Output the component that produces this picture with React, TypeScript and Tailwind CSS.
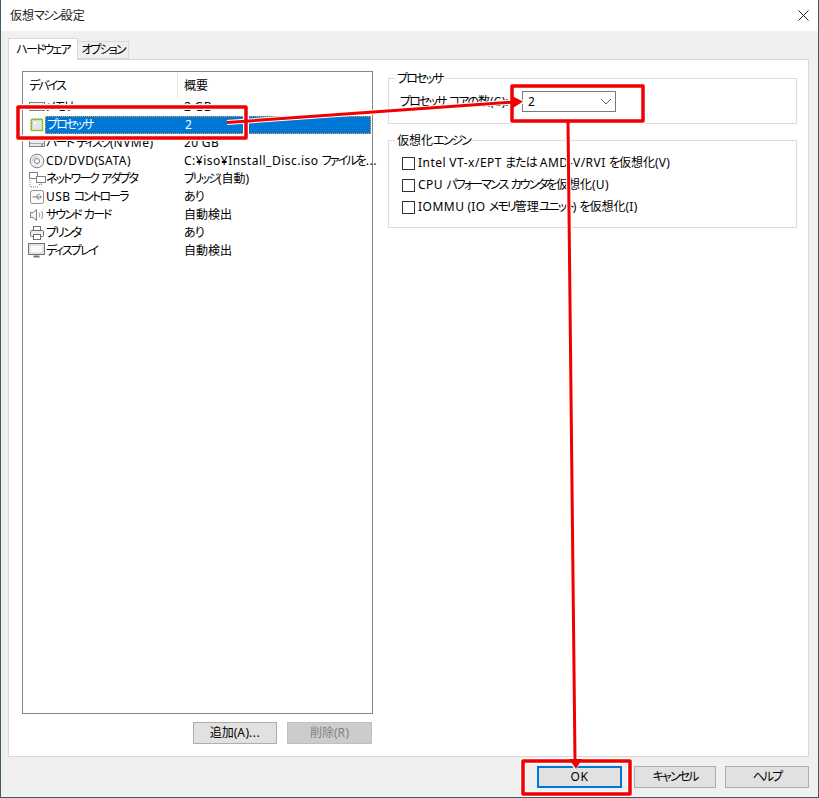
import React from "react";

const font = { fontFamily: '"Noto Sans", "Noto Sans CJK JP", sans-serif' };

function T({ children }: { children: string }) {
  const parts = children.match(/[\u30A0-\u30FF]+|[\u3040-\u309F]+|[A-Za-z0-9_:.\/\-¥]+|[^\u30A0-\u30FF\u3040-\u309FA-Za-z0-9_:.\/\-¥]+/g) ?? [];
  return (
    <span className="whitespace-pre">
      {parts.map((p, i) => {
        if (/^[\u30A0-\u30FF]/.test(p)) return <span key={i} className="tracking-[-1.9px]">{p}</span>;
        if (/^[\u3040-\u309F]/.test(p)) return <span key={i} className="tracking-[-1px]">{p}</span>;
        if (/^[A-Za-z0-9_:.\/\-¥]/.test(p)) return <span key={i} className="tracking-[0.5px]">{p}</span>;
        return <span key={i}>{p}</span>;
      })}
    </span>
  );
}

function Chip() {
  return (
    <svg width="16" height="16" viewBox="0 0 16 16" className="shrink-0">
      <path d="M4 1v14M6.500 1v14M9.500 1v14M12 1v14M1 4h14M1 6.500h14M1 9.500h14M1 12h14" stroke="#8a9aa8" strokeWidth="1" strokeDasharray="1 1" />
      <rect x="2.500" y="2.500" width="11" height="11" fill="#dfe8f0" stroke="#8fc31f" strokeWidth="1.400" />
      <rect x="5" y="5" width="2" height="2" fill="#fff" />
    </svg>
  );
}
function MemoryIcon() {
  return (
    <svg width="18" height="16" viewBox="0 0 18 16" className="shrink-0">
      <rect x="1.500" y="3.500" width="15" height="8" fill="#f0f0f0" stroke="#808080" />
      <path d="M3 10h12" stroke="#bbb" />
    </svg>
  );
}
function DiskIcon() {
  return (
    <svg width="18" height="16" viewBox="0 0 18 16" className="shrink-0">
      <rect x="1.500" y="3.500" width="15" height="8" fill="#ececec" stroke="#808080" />
      <path d="M2 8.500h14" stroke="#aaa" />
      <path d="M13 10h2" stroke="#555" />
    </svg>
  );
}
function CdIcon() {
  return (
    <svg width="16" height="16" viewBox="0 0 16 16" className="shrink-0">
      <circle cx="8" cy="8" r="6.800" fill="#f2f2f2" stroke="#808080" />
      <circle cx="8" cy="8" r="2.500" fill="#fff" stroke="#808080" />
      <path d="M3.500 8a4.500 4.500 0 0 1 4.500-4.500" stroke="#bbb" fill="none" />
    </svg>
  );
}
function NetIcon() {
  return (
    <svg width="17" height="17" viewBox="0 0 17 17" className="shrink-0">
      <rect x="0.500" y="1.500" width="8" height="6" fill="#fff" stroke="#808080" />
      <rect x="7.500" y="5.500" width="9" height="6" fill="#fff" stroke="#808080" />
      <path d="M10 13.500h4M12 11.500v2M1 9v7h9" stroke="#808080" fill="none" strokeDasharray="1 1" />
    </svg>
  );
}
function UsbIcon() {
  return (
    <svg width="16" height="16" viewBox="0 0 16 16" className="shrink-0">
      <rect x="1.500" y="1.500" width="13" height="13" rx="2" fill="#fafafa" stroke="#909090" />
      <path d="M3.500 8h8M7 8l2-2.500h1.500M7.500 8l1.500 2h1.500" stroke="#808080" fill="none" />
      <path d="M11 6.500l2 1.500-2 1.500z" fill="#808080" />
    </svg>
  );
}
function SoundIcon() {
  return (
    <svg width="16" height="16" viewBox="0 0 16 16" className="shrink-0">
      <path d="M1.500 5.500h2.500l3.500-3v11l-3.500-3h-2.500z" fill="#f2f2f2" stroke="#808080" />
      <path d="M10 5.500c1 1.500 1 3.500 0 5M12.500 4c1.500 2.500 1.500 5.500 0 8" stroke="#909090" fill="none" />
    </svg>
  );
}
function PrinterIcon() {
  return (
    <svg width="16" height="16" viewBox="0 0 16 16" className="shrink-0">
      <rect x="4.500" y="1.500" width="7" height="4" fill="#fff" stroke="#707070" />
      <rect x="1.500" y="5.500" width="13" height="6" rx="1" fill="#eee" stroke="#707070" />
      <rect x="4.500" y="9.500" width="7" height="5" fill="#fff" stroke="#707070" />
    </svg>
  );
}
function MonitorIcon() {
  return (
    <svg width="18" height="16" viewBox="0 0 18 16" className="shrink-0">
      <rect x="0.500" y="0.500" width="16" height="11" fill="#eef0f2" stroke="#707070" />
      <rect x="2" y="2" width="13" height="8" fill="#f8f9fa" stroke="#b5b5b5" strokeWidth="0.500" />
      <path d="M5.500 13.500h6" stroke="#777" strokeWidth="2" />
    </svg>
  );
}

const rows: { icon: React.ReactNode; name: string; value: string; selected?: boolean }[] = [
  { icon: <MemoryIcon />, name: "メモリ", value: "2 GB" },
  { icon: <Chip />, name: "プロセッサ", value: "2", selected: true },
  { icon: <DiskIcon />, name: "ハード ディスク(NVMe)", value: "20 GB" },
  { icon: <CdIcon />, name: "CD/DVD(SATA)", value: "C:¥iso¥Install_Disc.iso ファイルを..." },
  { icon: <NetIcon />, name: "ネットワーク アダプタ", value: "ブリッジ(自動)" },
  { icon: <UsbIcon />, name: "USB コントローラ", value: "あり" },
  { icon: <SoundIcon />, name: "サウンド カード", value: "自動検出" },
  { icon: <PrinterIcon />, name: "プリンタ", value: "あり" },
  { icon: <MonitorIcon />, name: "ディスプレイ", value: "自動検出" },
];

function Check({ label }: { label: string }) {
  return (
    <label className="flex items-center h-[22px] gap-[3px] pl-[2px]">
      <span className="w-[13px] h-[13px] border border-[#333] bg-white shrink-0" />
      <T>{label}</T>
    </label>
  );
}

function Group({ title, className, children }: { title: string; className: string; children: React.ReactNode }) {
  return (
    <fieldset className={`border border-[#dcdcdc] px-[11px] m-0 ${className}`}>
      <legend className="px-[2px] -ml-[5px] leading-[16px] h-[14px]"><T>{title}</T></legend>
      {children}
    </fieldset>
  );
}

function Btn({ label, className }: { label: string; className: string }) {
  return (
    <div className={`h-[22px] flex items-center justify-center ${className}`}><T>{label}</T></div>
  );
}

export default function App() {
  return (
    <div style={font} className="relative w-[819px] h-[798px] overflow-hidden bg-[#f0f0f0] text-[12px] text-black flex flex-col border-x border-b border-[#3f5a68] border-t-0 [font-feature-settings:'palt']">
      <div className="h-[31px] bg-white flex items-center justify-between pl-[9px] pr-[9px] shrink-0">
        <span className="text-[#222]"><T>仮想マシン設定</T></span>
        <svg width="11" height="11" viewBox="0 0 11 11"><path d="M.5.500l10 10M10.500.500l-10 10" stroke="#222" fill="none" /></svg>
      </div>

      <div className="flex items-end h-[28px] pl-[7px] shrink-0 relative z-10">
        <div className="h-[22px] w-[70px] -mb-px bg-white border border-b-0 border-[#d9d9d9] flex items-center justify-center"><T>ハードウェア</T></div>
        <div className="h-[18px] w-[51px] bg-[#f0f0f0] border border-l-0 border-[#d9d9d9] flex items-center justify-center"><T>オプション</T></div>
      </div>

      <div className="ml-[7px] mr-[9px] h-[698px] bg-white border border-[#d9d9d9] shrink-0 flex pl-[13px] pr-[11px] pt-[11px] pb-[12px] gap-[15px]">
        <div className="w-[351px] flex flex-col shrink-0">
          <div className="h-[643px] border border-[#828790] bg-white shrink-0">
            <div className="flex h-[26px] items-center">
              <div className="w-[155px] h-full pl-[6px] pt-px flex items-center border-r border-[#e5e5e5]"><T>デバイス</T></div>
              <div className="pl-[6px] pt-px"><T>概要</T></div>
            </div>
            {rows.map((r) => (
              <div key={r.name} className="flex h-[18px] items-center pl-[5px] pr-px">
                <span className="w-[18px] flex justify-center shrink-0">{r.icon}</span>
                {r.selected ? (
                  <div className="flex-1 h-[18px] flex items-center bg-[#0078d7] text-white border border-dotted border-[#ff9a2e] ml-[-1px] min-w-0">
                    <span className="w-[138px] pl-px shrink-0"><T>{r.name}</T></span>
                    <span className="pl-[1px]"><T>{r.value}</T></span>
                  </div>
                ) : (
                  <>
                    <span className="w-[138px] shrink-0 overflow-hidden"><T>{r.name}</T></span>
                    <span><T>{r.value}</T></span>
                  </>
                )}
              </div>
            ))}
          </div>
          <div className="flex justify-end gap-[10px] mt-[8px] pr-px">
            <Btn label="追加(A)..." className="w-[84px] bg-[#e1e1e1] border border-[#adadad]" />
            <Btn label="削除(R)" className="w-[85px] bg-[#cccccc] border border-[#bfbfbf] text-[#838383]" />
          </div>
        </div>

        <div className="flex-1 flex flex-col min-w-0">
          <Group title="プロセッサ" className="h-[53px] pt-[6px]">
            <div className="flex items-center h-[21px]">
              <span className="w-[122px] shrink-0 overflow-hidden"><T>プロセッサ コアの数(C):</T></span>
              <div className="w-[94px] h-[21px] bg-white border border-[#7a7a7a] flex items-center justify-between pl-[5px] pr-[3px]">
                <span>2</span>
                <svg width="12" height="7" viewBox="0 0 12 7"><path d="M1 1l5 5 5-5" stroke="#606060" fill="none" /></svg>
              </div>
            </div>
          </Group>
          <Group title="仮想化エンジン" className="h-[95px] mt-[9px] pt-[5px]">
            <div className="flex flex-col">
              <Check label="Intel VT-x/EPT または AMD-V/RVI を仮想化(V)" />
              <Check label="CPU パフォーマンス カウンタを仮想化(U)" />
              <Check label="IOMMU (IO メモリ管理ユニット) を仮想化(I)" />
            </div>
          </Group>
        </div>
      </div>

      <div className="flex-1 flex justify-end items-start gap-[9px] pt-[9px] pr-[9px]">
        <Btn label="OK" className="w-[85px] bg-[#e1e1e1] border-2 border-[#0078d7] mr-[3px]" />
        <Btn label="キャンセル" className="w-[82px] bg-[#e1e1e1] border border-[#adadad]" />
        <Btn label="ヘルプ" className="w-[84px] bg-[#e1e1e1] border border-[#adadad]" />
      </div>

      <svg className="absolute left-[-1px] top-0 pointer-events-none" width="819" height="798" viewBox="0 0 819 798">
        <g fill="none" stroke="#fff" strokeWidth="6" strokeLinejoin="round">
          <rect x="18" y="107" width="228" height="31" />
          <rect x="512" y="86" width="131" height="35" />
          <rect x="523" y="761" width="107" height="33" />
          <path d="M227 122.500L514 102M568 120L575 760" strokeWidth="5" />
        </g>
        <path d="M511 95L524 101.500L512 109z M568 758h14l-6.500 11z" fill="#fff" stroke="#fff" strokeWidth="2" />
        <g fill="none" stroke="#f00000" strokeWidth="3.500" strokeLinejoin="round">
          <rect x="18" y="107" width="228" height="31" />
          <rect x="512" y="86" width="131" height="35" />
          <rect x="523" y="761" width="107" height="33" />
          <path d="M227 122.500L514 102M568 120L575 760" strokeWidth="3" />
        </g>
        <path d="M512 96L523 101.500L513 108z M569 759h13l-6 10z" fill="#f00000" />
      </svg>
    </div>
  );
}
